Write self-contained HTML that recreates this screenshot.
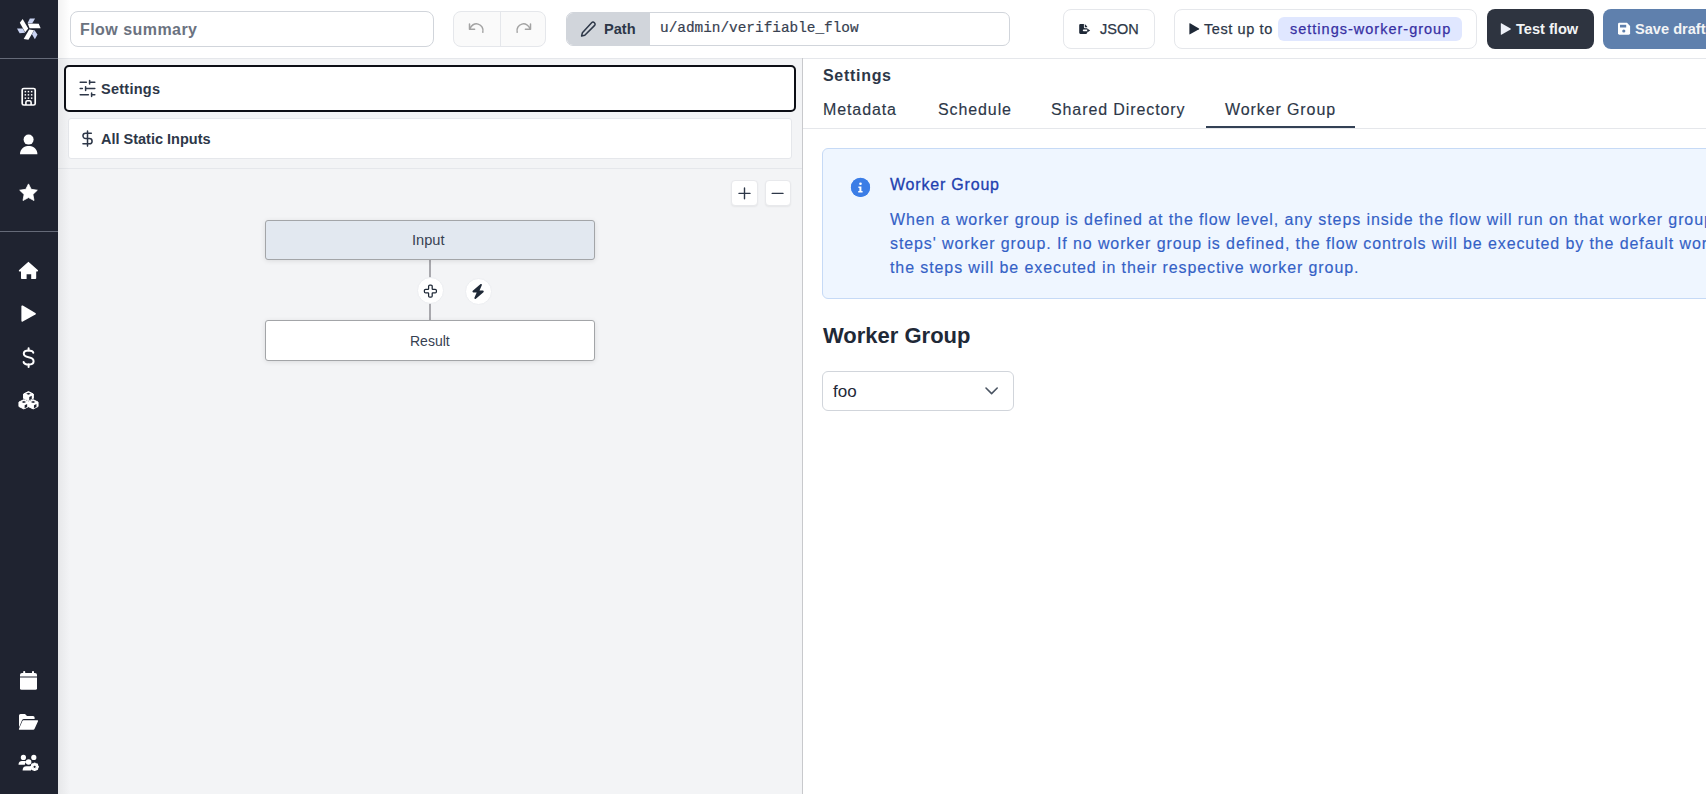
<!DOCTYPE html>
<html><head><meta charset="utf-8">
<style>
*{box-sizing:border-box;margin:0;padding:0}
html,body{width:1706px;height:794px;overflow:hidden;background:#fff;font-family:"Liberation Sans",sans-serif;color:#1f2937;position:relative}
.a{position:absolute}
.t{position:absolute;white-space:nowrap;line-height:1}
.med{-webkit-text-stroke:0.25px currentColor}
svg{position:absolute;overflow:visible}
</style></head><body>

<!-- ===== SIDEBAR ===== -->
<div class="a" style="left:0;top:0;width:58px;height:794px;background:#1f2330"></div>
<svg style="left:12px;top:12px" width="34" height="34" viewBox="-17.8 -17.5 35.6 35.6">
  <g><polygon points="-1.3,-5.4 10.2,-5.2 12.2,-0.6 0.6,-0.6" fill="#fff"/><polygon points="0.9,-10.8 6.4,-10.8 3.4,-5.6 -1.6,-5.6" fill="#c9d3f2"/></g>
  <g transform="rotate(120)"><polygon points="-1.3,-5.4 10.2,-5.2 12.2,-0.6 0.6,-0.6" fill="#fff"/><polygon points="0.9,-10.8 6.4,-10.8 3.4,-5.6 -1.6,-5.6" fill="#c9d3f2"/></g>
  <g transform="rotate(240)"><polygon points="-1.3,-5.4 10.2,-5.2 12.2,-0.6 0.6,-0.6" fill="#fff"/><polygon points="0.9,-10.8 6.4,-10.8 3.4,-5.6 -1.6,-5.6" fill="#c9d3f2"/></g>
</svg>
<div class="a" style="left:0;top:58px;width:58px;height:1px;background:#656a78"></div>
<div class="a" style="left:0;top:231px;width:58px;height:1px;background:#656a78"></div>


<!-- sidebar icons -->
<svg style="left:0;top:0" width="58" height="794" viewBox="0 0 58 794">
  <!-- building -->
  <rect x="22.2" y="88.5" width="13" height="16.5" rx="1.6" fill="none" stroke="#fff" stroke-width="1.7"/>
  <g fill="#fff">
    <rect x="24.6" y="90.9" width="1.5" height="1.5"/><rect x="27.7" y="90.9" width="1.5" height="1.5"/><rect x="30.9" y="90.9" width="1.5" height="1.5"/>
    <rect x="24.6" y="94.1" width="1.5" height="1.5"/><rect x="27.7" y="94.1" width="1.5" height="1.5"/><rect x="30.9" y="94.1" width="1.5" height="1.5"/>
    <rect x="24.6" y="97.4" width="1.5" height="1.5"/><rect x="27.7" y="97.4" width="1.5" height="1.5"/><rect x="30.9" y="97.4" width="1.5" height="1.5"/>
  </g>
  <path d="M25.9 105 V102.3 Q25.9 100.7 27.5 100.7 H29.5 Q31.1 100.7 31.1 102.3 V105" fill="none" stroke="#fff" stroke-width="1.6"/>
  <!-- user -->
  <circle cx="28.6" cy="139.6" r="5" fill="#fff"/>
  <path d="M20 154.3 C20 149.8 23.4 146.1 27.6 146.1 H29.8 C34 146.1 37.4 149.8 37.4 154.3 Z" fill="#fff"/>
  <!-- star -->
  <path d="M28.5 183.9 L31.2 189.3 L37.3 190.2 L32.9 194.4 L34 200.5 L28.5 197.6 L23 200.5 L24.1 194.4 L19.7 190.2 L25.8 189.3 Z" fill="#fff" stroke="#fff" stroke-width="0.8" stroke-linejoin="round"/>
  <!-- home -->
  <path d="M28.4 261.7 L38 270.3 Q38.4 271.6 37 271.6 H36.2 V278.2 Q36.2 279 35.4 279 H31.2 V274.3 H26.6 V279 H21.8 Q21 279 21 278.2 V271.6 H19.8 Q18.4 271.6 18.9 270.3 Z" fill="#fff"/>
  <!-- play -->
  <path d="M22.8 305.6 Q21.4 304.9 21.4 306.6 V320.6 Q21.4 322.3 22.8 321.6 L35.4 314.6 Q36.6 313.8 35.4 313 Z" fill="#fff"/>
  <!-- dollar -->
  <path d="M33.3 352.8 Q32.8 350.5 28.6 350.5 Q23.8 350.5 23.8 353.6 Q23.8 356.4 28.6 357.2 Q33.6 358 33.6 361.2 Q33.6 364.6 28.6 364.6 Q24.2 364.6 23.6 362" fill="none" stroke="#fff" stroke-width="2" stroke-linecap="round"/>
  <path d="M28.6 348.2 V350.5 M28.6 364.6 V366.9" stroke="#fff" stroke-width="2" stroke-linecap="round"/>
  <!-- cubes -->
  <g fill="#fff" stroke="#fff" stroke-width="1" stroke-linejoin="round"><path d="M28.45 391.59999999999997 L33.35 394.0 V398.4 L28.45 400.8 L23.549999999999997 398.4 V394.0 Z"/><path d="M23.85 399.7 L28.75 402.1 V406.5 L23.85 408.90000000000003 L18.950000000000003 406.5 V402.1 Z"/><path d="M33.15 399.7 L38.05 402.1 V406.5 L33.15 408.90000000000003 L28.25 406.5 V402.1 Z"/></g>
  <g fill="#1f2330"><path d="M26.15 393.8 L28.45 392.8 L30.75 393.8 L28.45 394.8 Z"/><path d="M29.25 397.09999999999997 L31.75 395.8 V399.0 L29.25 400.2 Z"/><path d="M21.55 401.90000000000003 L23.85 400.90000000000003 L26.150000000000002 401.90000000000003 L23.85 402.90000000000003 Z"/><path d="M24.650000000000002 405.2 L27.150000000000002 403.90000000000003 V407.1 L24.650000000000002 408.3 Z"/><path d="M30.849999999999998 401.90000000000003 L33.15 400.90000000000003 L35.449999999999996 401.90000000000003 L33.15 402.90000000000003 Z"/><path d="M33.949999999999996 405.2 L36.449999999999996 403.90000000000003 V407.1 L33.949999999999996 408.3 Z"/></g>
  <!-- calendar -->
  <rect x="23.2" y="671" width="2" height="3.4" rx="0.8" fill="#fff"/>
  <rect x="32" y="671" width="2" height="3.4" rx="0.8" fill="#fff"/>
  <path d="M20 675 Q20 673 22 673 H35 Q37 673 37 675 V676.4 H20 Z" fill="#fff"/>
  <path d="M20 677.6 H37 V688.2 Q37 689.8 35.4 689.8 H21.6 Q20 689.8 20 688.2 Z" fill="#fff"/>
  <!-- folder open -->
  <path d="M19 727.5 V715.5 Q19 714 20.5 714 H25 L27 716 H33 Q34.6 716 34.6 717.6 V719 H24 Q22.6 719 22 720.2 L19 727.5 Z" fill="#fff"/>
  <path d="M23.4 720.2 H37.3 Q38.5 720.2 38 721.3 L34.6 728.8 Q34.2 729.7 33.2 729.7 H19.4 Q18.6 729.7 19 728.8 L22.4 720.9 Q22.7 720.2 23.4 720.2 Z" fill="#fff"/>
  <!-- users gear -->
  <circle cx="23.4" cy="757.4" r="2.6" fill="#fff"/>
  <path d="M18.5 764.8 Q18.5 761 22 761 H24.8 Q26 761 26.6 761.6 Q25 763 24.8 764.8 Z" fill="#fff"/>
  <circle cx="33.8" cy="757.4" r="2.6" fill="#fff"/>
  <circle cx="28.6" cy="762" r="2.8" fill="#fff"/>
  <path d="M22.6 770.6 Q22.6 766.2 26.4 766.2 H30.8 Q31.6 766.2 32.2 766.5 Q30.4 768.4 31 770.6 Z" fill="#fff"/>
  <g transform="translate(34.6 766.8)">
    <circle r="3" fill="none" stroke="#fff" stroke-width="1.8"/>
    <g stroke="#fff" stroke-width="1.6">
      <line x1="0" y1="-4.2" x2="0" y2="4.2"/><line x1="-4.2" y1="0" x2="4.2" y2="0"/>
      <line x1="-3" y1="-3" x2="3" y2="3"/><line x1="-3" y1="3" x2="3" y2="-3"/>
    </g>
    <circle r="1.1" fill="#1f2330"/>
  </g>
</svg>

<!-- ===== HEADER ===== -->

<!-- flow summary -->
<div class="a" style="left:70px;top:11px;width:364px;height:36px;border:1px solid #d1d5db;border-radius:8px"></div>
<div class="t" style="left:80px;top:22px;font-size:16px;font-weight:bold;letter-spacing:0.45px;color:#6b7280">Flow summary</div>
<!-- undo/redo -->
<div class="a" style="left:453px;top:11px;width:93px;height:36px;border:1px solid #e5e7eb;border-radius:8px;background:#fafafa"></div>
<div class="a" style="left:500px;top:12px;width:1px;height:34px;background:#e5e7eb"></div>
<!-- path -->
<div class="a" style="left:566px;top:12px;width:444px;height:34px;border:1px solid #d1d5db;border-radius:7px;overflow:hidden;background:#fff">
  <div class="a" style="left:0;top:0;width:83px;height:34px;background:#d1d5db"></div>
</div>
<div class="t" style="left:604px;top:22px;font-size:14.6px;font-weight:bold;color:#2d3748">Path</div>
<div class="t" style="left:660px;top:21px;font-size:14.4px;font-family:'Liberation Mono',monospace;color:#374151;-webkit-text-stroke:0.2px #374151">u/admin/verifiable_flow</div>
<!-- JSON -->
<div class="a" style="left:1063px;top:9px;width:92px;height:40px;border:1px solid #e5e7eb;border-radius:8px"></div>
<div class="t med" style="left:1100px;top:22px;font-size:14.5px;color:#2d3748">JSON</div>
<!-- Test up to -->
<div class="a" style="left:1174px;top:9px;width:303px;height:40px;border:1px solid #e5e7eb;border-radius:8px"></div>
<div class="t med" style="left:1204px;top:22px;font-size:14.5px;letter-spacing:0.6px;color:#2d3748">Test up to</div>
<div class="a" style="left:1278px;top:17px;width:184px;height:24px;border-radius:6px;background:#e0e7ff"></div>
<div class="t med" style="left:1290px;top:22px;font-size:14.5px;letter-spacing:1px;color:#3730a3">settings-worker-group</div>
<!-- Test flow -->
<div class="a" style="left:1487px;top:9px;width:107px;height:40px;border-radius:8px;background:#2e3440"></div>
<div class="t" style="left:1516px;top:22px;font-size:14.6px;font-weight:bold;color:#f3f4f6">Test flow</div>
<!-- Save draft -->
<div class="a" style="left:1603px;top:9px;width:140px;height:40px;border-radius:8px;background:#5f80ad"></div>
<div class="t" style="left:1635px;top:22px;font-size:14.6px;font-weight:bold;color:#f3f4f6">Save draft</div>

<!-- ===== LEFT PANEL ===== -->
<div class="a" style="left:58px;top:58px;width:744px;height:736px;background:#f3f4f6"></div>
<div class="a" style="left:58px;top:58px;width:1648px;height:1px;background:#e5e7eb"></div>
<div class="a" style="left:64px;top:65px;width:732px;height:47px;border:2px solid #0d0f16;border-radius:5px;background:#fff"></div>
<div class="t" style="left:101px;top:82px;font-size:14.5px;font-weight:bold;letter-spacing:0.25px;color:#2d3748">Settings</div>
<div class="a" style="left:68px;top:118px;width:724px;height:41px;border:1px solid #e5e7eb;border-radius:3px;background:#fff"></div>
<div class="t" style="left:101px;top:132px;font-size:14.5px;font-weight:bold;color:#2d3748">All Static Inputs</div>
<div class="a" style="left:58px;top:168px;width:744px;height:1px;background:#e5e7eb"></div>

<!-- flow graph -->
<div class="a" style="left:731px;top:180px;width:27px;height:26px;border:1px solid #e8e9ec;border-radius:4px;background:#fff;box-shadow:0 1px 2px rgba(0,0,0,.06)"></div>
<div class="a" style="left:765px;top:180px;width:26px;height:26px;border:1px solid #e8e9ec;border-radius:4px;background:#fff;box-shadow:0 1px 2px rgba(0,0,0,.06)"></div>
<div class="a" style="left:429px;top:259px;width:2px;height:62px;background:#a8a8ad"></div>
<div class="a" style="left:265px;top:220px;width:330px;height:40px;border:1px solid #a3a5a8;border-radius:3px;background:#e2e8f0;box-shadow:0 1px 5px rgba(0,0,0,.10)"></div>
<div class="t" style="left:412px;top:233px;font-size:14.6px;color:#374151">Input</div>
<div class="a" style="left:265px;top:320px;width:330px;height:41px;border:1px solid #a3a5a8;border-radius:3px;background:#fff;box-shadow:0 1px 5px rgba(0,0,0,.10)"></div>
<div class="t" style="left:410px;top:334px;font-size:14px;color:#374151">Result</div>
<div class="a" style="left:416.5px;top:277px;width:27px;height:27px;border-radius:50%;background:#fff;border:1px solid #eceef1"></div>
<div class="a" style="left:464.5px;top:277.5px;width:27px;height:27px;border-radius:50%;background:#fff;border:1px solid #eceef1"></div>

<div class="a" style="left:802px;top:58px;width:1px;height:736px;background:#c8c9cc"></div>

<div class="a" style="left:58px;top:0;width:12px;height:794px;background:linear-gradient(to right,rgba(0,0,0,0.05),rgba(0,0,0,0))"></div>
<!-- ===== RIGHT PANEL ===== -->
<div class="t" style="left:823px;top:68px;font-size:16px;font-weight:bold;letter-spacing:0.7px;color:#2d3748">Settings</div>
<div class="t" style="left:823px;top:102px;font-size:16px;letter-spacing:0.9px;color:#2d3748;-webkit-text-stroke:0.15px #2d3748">Metadata</div>
<div class="t" style="left:938px;top:102px;font-size:16px;letter-spacing:0.9px;color:#2d3748;-webkit-text-stroke:0.15px #2d3748">Schedule</div>
<div class="t" style="left:1051px;top:102px;font-size:16px;letter-spacing:0.9px;color:#2d3748;-webkit-text-stroke:0.15px #2d3748">Shared Directory</div>
<div class="t" style="left:1225px;top:102px;font-size:16px;letter-spacing:0.9px;color:#2d3748;-webkit-text-stroke:0.15px #2d3748">Worker Group</div>
<div class="a" style="left:803px;top:128px;width:903px;height:1px;background:#e5e7eb"></div>
<div class="a" style="left:1206px;top:126px;width:149px;height:2px;background:#334155"></div>

<!-- alert -->
<div class="a" style="left:822px;top:148px;width:1000px;height:151px;border:1px solid #c6daf6;border-radius:6px;background:#eff6ff"></div>
<div class="a" style="left:851px;top:178px;width:19px;height:19px;border-radius:50%;background:#3b82f6"></div>
<div class="t" style="left:890px;top:177px;font-size:16px;letter-spacing:0.8px;color:#1e40af;-webkit-text-stroke:0.3px #1e40af">Worker Group</div>
<div class="t" style="left:890px;top:208px;font-size:16px;letter-spacing:0.9px;line-height:24px;color:#3461c6;-webkit-text-stroke:0.15px #3461c6">When a worker group is defined at the flow level, any steps inside the flow will run on that worker group, regardless of the<br>steps' worker group. If no worker group is defined, the flow controls will be executed by the default worker group<br>the steps will be executed in their respective worker group.</div>

<!-- worker group heading + select -->
<div class="t" style="left:823px;top:325px;font-size:22px;font-weight:bold;color:#1f2937">Worker Group</div>
<div class="a" style="left:822px;top:371px;width:192px;height:40px;border:1px solid #d1d5db;border-radius:6px;background:#fff"></div>
<div class="t" style="left:833px;top:383px;font-size:17px;color:#1f2937">foo</div>


<!-- header icons -->
<svg style="left:0;top:0" width="1706" height="58" viewBox="0 0 1706 58">
  <!-- undo -->
  <path d="M469.5 24 V29.2 H474.6" fill="none" stroke="#a3a3a3" stroke-width="1.5" stroke-linecap="round" stroke-linejoin="round"/>
  <path d="M470 28.8 A6.6 6.6 0 0 1 482.8 32.2" fill="none" stroke="#a3a3a3" stroke-width="1.5" stroke-linecap="round"/>
  <!-- redo -->
  <path d="M530.5 24 V29.2 H525.4" fill="none" stroke="#a3a3a3" stroke-width="1.5" stroke-linecap="round" stroke-linejoin="round"/>
  <path d="M530 28.8 A6.6 6.6 0 0 0 517.2 32.2" fill="none" stroke="#a3a3a3" stroke-width="1.5" stroke-linecap="round"/>
  <!-- pencil -->
  <path d="M592.2 24.6 Q593.6 23.2 595 24.6 Q596.4 26 595 27.4 L585.4 37 L582.2 37.8 L583 34.6 Z" fill="none" stroke="#2d3748" stroke-width="1.5" stroke-linejoin="round" transform="translate(-0.6 -1.8)"/>
  <!-- json file export -->
  <path d="M1079.2 25.2 Q1079.2 24 1080.4 24 H1083.9 V27.2 Q1083.9 28.2 1084.9 28.2 H1087.2 V29.6 H1083.6 Q1082.8 29.6 1082.8 30.5 Q1082.8 31.3 1083.6 31.3 H1087.2 V32.8 Q1087.2 33.9 1086 33.9 H1080.4 Q1079.2 33.9 1079.2 32.8 Z" fill="#1f2937"/>
  <path d="M1084.8 24 L1087.2 26.6 V27.3 H1084.8 Z" fill="#1f2937"/>
  <path d="M1087.2 28.4 L1090.2 30.5 L1087.2 32.6 Z" fill="#1f2937"/>
  <!-- play (test up to) -->
  <path d="M1189.4 23.6 Q1189.4 23 1190 23.3 L1199 28.4 Q1199.5 28.8 1199 29.2 L1190 34.3 Q1189.4 34.6 1189.4 34 Z" fill="#1f2937"/>
  <!-- play (test flow) -->
  <path d="M1500.8 23.6 Q1500.8 23 1501.4 23.3 L1510.6 28.6 Q1511.1 29 1510.6 29.4 L1501.4 34.7 Q1500.8 35 1500.8 34.4 Z" fill="#eef1f8"/>
  <!-- save -->
  <path d="M1618 24.2 Q1618 22.8 1619.4 22.8 H1627 L1630.1 25.9 V33.3 Q1630.1 34.7 1628.7 34.7 H1619.4 Q1618 34.7 1618 33.3 Z" fill="#fff"/>
  <rect x="1620" y="24.8" width="6.2" height="2.7" fill="#5f80ad"/>
  <circle cx="1623.8" cy="31" r="1.6" fill="#5f80ad"/>
</svg>

<!-- left panel icons -->
<svg style="left:0;top:0" width="802" height="420" viewBox="0 0 802 420">
  <!-- sliders -->
  <g stroke="#2d3748" stroke-width="1.5" stroke-linecap="round" fill="none">
    <line x1="80.2" y1="82.2" x2="86.4" y2="82.2"/><line x1="89.6" y1="82.2" x2="94.8" y2="82.2"/><line x1="89.6" y1="80.4" x2="89.6" y2="84"/>
    <line x1="80.2" y1="88.6" x2="82.4" y2="88.6"/><line x1="85.6" y1="88.6" x2="94.8" y2="88.6"/><line x1="85.6" y1="86.8" x2="85.6" y2="90.4"/>
    <line x1="80.2" y1="94.8" x2="88.4" y2="94.8"/><line x1="91.6" y1="94.8" x2="94.8" y2="94.8"/><line x1="91.6" y1="93" x2="91.6" y2="96.6"/>
  </g>
  <!-- dollar -->
  <g transform="translate(78.4 129.4) scale(0.76)" stroke="#2d3748" stroke-width="2" stroke-linecap="round" stroke-linejoin="round" fill="none">
    <line x1="12" y1="2" x2="12" y2="22"/><path d="M17 5H9.5a3.5 3.5 0 0 0 0 7h5a3.5 3.5 0 0 1 0 7H6"/>
  </g>
  <!-- zoom buttons -->
  <g stroke="#2d3748" stroke-width="1.4" stroke-linecap="round">
    <line x1="739" y1="193.4" x2="750" y2="193.4"/><line x1="744.5" y1="188" x2="744.5" y2="198.8"/>
    <line x1="772.2" y1="193.4" x2="783" y2="193.4"/>
  </g>
  <!-- cross -->
  <g transform="translate(423.2 283.9) scale(0.6)"><path d="M4 9a2 2 0 0 0-2 2v2a2 2 0 0 0 2 2h4a1 1 0 0 1 1 1v4a2 2 0 0 0 2 2h2a2 2 0 0 0 2-2v-4a1 1 0 0 1 1-1h4a2 2 0 0 0 2-2v-2a2 2 0 0 0-2-2h-4a1 1 0 0 1-1-1V4a2 2 0 0 0-2-2h-2a2 2 0 0 0-2 2v4a1 1 0 0 1-1 1z" fill="none" stroke="#1f2937" stroke-width="2.1" stroke-linejoin="round"/></g>
  <!-- bolt -->
  <g transform="translate(471.5 283.9) scale(0.0295)"><path d="M349.4 44.6c5.9-13.7 1.5-29.7-10.6-38.5s-28.6-8.1-39.9 1.8l-256 224c-10 8.8-13.6 22.9-8.9 35.3S50.7 288 64 288H175.5L98.6 467.4c-5.9 13.7-1.5 29.7 10.6 38.5s28.6 8.1 39.9-1.8l256-224c10-8.8 13.6-22.9 8.9-35.3s-16.6-20.7-30-20.7H272.5L349.4 44.6z" fill="#1f2937"/></g>
</svg>

<!-- right icons -->
<svg style="left:803px;top:140px" width="903" height="300" viewBox="803 140 903 300">
  <circle cx="860.5" cy="187.4" r="9.6" fill="#3b7de6"/>
  <circle cx="860.5" cy="183.8" r="1.3" fill="#fff"/>
  <path d="M858.4 186.6 H861.4 V191 H862.6 V192.4 H858.2 V191 H859.4 V188 H858.4 Z" fill="#fff"/>
  <path d="M986 388 L991.6 393.6 L997.2 388" fill="none" stroke="#4b5563" stroke-width="1.6" stroke-linecap="round" stroke-linejoin="round"/>
</svg>
</body></html>
